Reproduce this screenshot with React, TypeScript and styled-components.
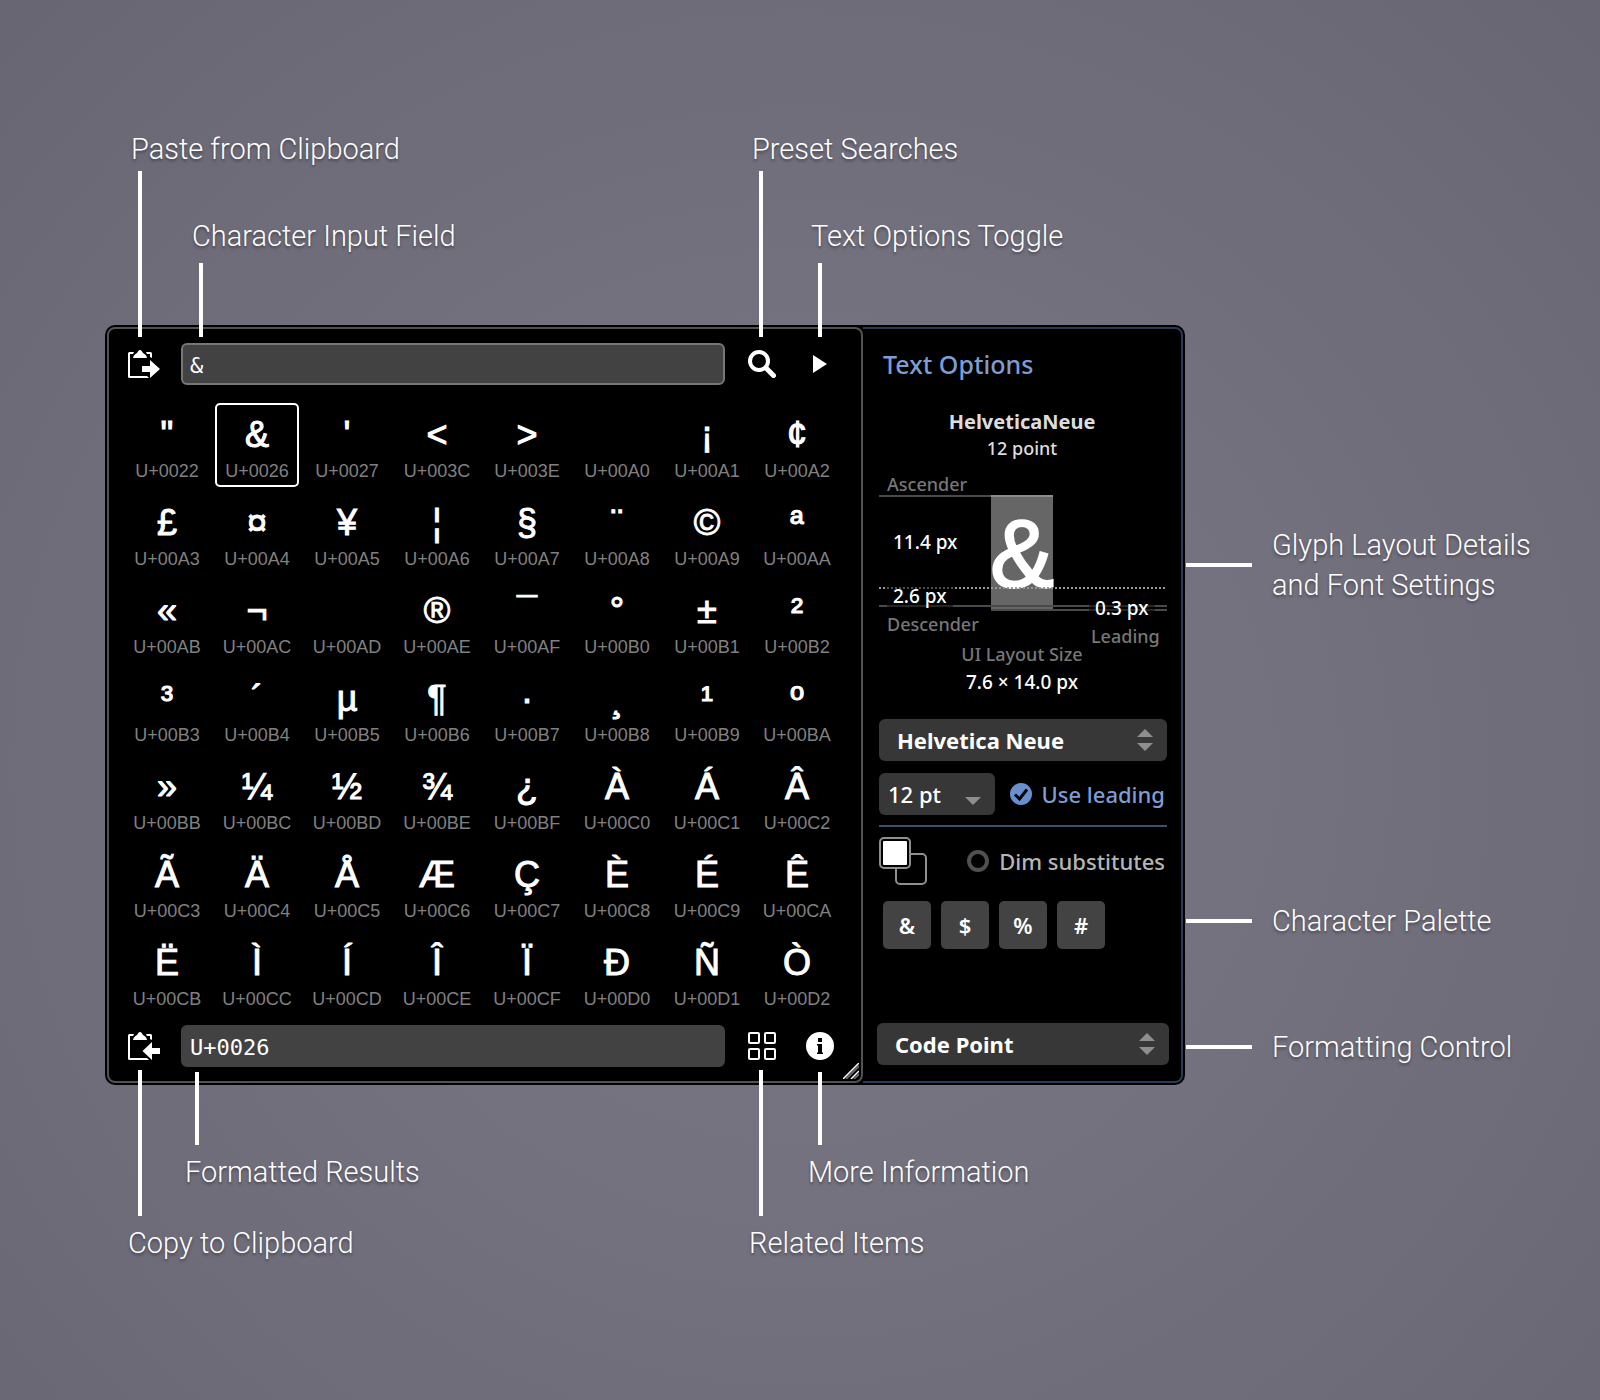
import React from "react";
import styled, { createGlobalStyle, css } from "styled-components";

const GlobalStyle = createGlobalStyle`
  *, *::before, *::after { box-sizing: border-box; }
  body { margin: 0; background: #6d6c79; }
  button, input, select { font: inherit; color: inherit; margin: 0; }
`;

const helvetica = `"Liberation Sans", Arial, sans-serif`;
const lucida = `"Noto Sans", "Open Sans", sans-serif`;

/* ---------- page and window ---------- */

const Page = styled.main`
  min-height: 100vh;
  padding: 325px 415px 315px 105px;
  background: radial-gradient(ellipse at 50% 55%, #787683 0%, #73717e 45%, #686673 100%);
  font-family: ${lucida};
  color: #fff;
`;

const Window = styled.section`
  display: grid;
  grid-template-columns: minmax(0, 1fr) 320px;
  padding: 2px;
  border-radius: 10px;
  background: #000;
`;

const MainPane = styled.div`
  position: relative;
  padding: 14px 0;
  border: 2px solid #525252;
  border-radius: 8px;
`;

const OptionsPane = styled.aside`
  display: flex;
  flex-direction: column;
  padding: 14px 0 16px;
  border: solid #2d3a55;
  border-width: 2px 2px 2px 0;
  border-radius: 0 8px 8px 0;
`;

/* ---------- callouts ---------- */

type Side = "top" | "bottom" | "right";

const Anchor = styled.div<{ $grow?: boolean }>`
  position: relative;
  ${(p) => p.$grow && css`flex: 1; min-width: 0; margin: 0 23px 0 21px;`}
`;

const CalloutBox = styled.div<{ $side: Side; $long?: boolean; $at: number }>`
  position: absolute;
  z-index: 2;
  display: flex;
  pointer-events: none;
  ${(p) =>
    p.$side === "top" &&
    css`
      bottom: calc(100% + 6px);
      left: ${p.$at}px;
      flex-direction: column;
      gap: ${p.$long ? 2 : 7}px;
    `}
  ${(p) =>
    p.$side === "bottom" &&
    css`
      top: calc(100% + ${p.$long ? 3 : 5}px);
      left: ${p.$at}px;
      flex-direction: column-reverse;
      gap: 7px;
    `}
  ${(p) =>
    p.$side === "right" &&
    css`
      left: calc(100% + 5px);
      top: ${p.$at}px;
      flex-direction: row-reverse;
      align-items: center;
      gap: 20px;
    `}
`;

const CalloutText = styled.span<{ $side: Side }>`
  font: 300 29px/40px Roboto, ${helvetica};
  white-space: pre;
  text-shadow: 0 2px 3px rgba(0, 0, 0, 0.4);
  margin-left: ${(p) => (p.$side === "top" ? -7 : p.$side === "bottom" ? -10 : 0)}px;
`;

const Leader = styled.span<{ $side: Side; $long?: boolean }>`
  flex: none;
  background: #fff;
  width: ${(p) => (p.$side === "right" ? 66 : 4)}px;
  height: ${(p) => {
    if (p.$side === "right") return 4;
    if (p.$side === "top") return p.$long ? 166 : 74;
    return p.$long ? 146 : 73;
  }}px;
`;

function Callout({ side, long, at, children }: { side: Side; long?: boolean; at: number; children: React.ReactNode }) {
  return (
    <CalloutBox $side={side} $long={long} $at={at}>
      <CalloutText $side={side}>{children}</CalloutText>
      <Leader $side={side} $long={long} />
    </CalloutBox>
  );
}

/* ---------- main pane ---------- */

const Toolbar = styled.div`
  display: flex;
  align-items: center;
  padding: 0 27px 0 19px;
`;

const ToolGroup = styled.div`
  display: flex;
  gap: 30px;
`;

const IconButton = styled.button`
  display: flex;
  align-items: center;
  justify-content: center;
  min-width: 28px;
  height: 42px;
  padding: 0;
  border: 0;
  background: none;
  cursor: pointer;
`;

const Field = styled.input<{ $outlined?: boolean }>`
  display: block;
  width: 100%;
  height: 42px;
  padding: 3px 7px 0;
  border: 2px solid ${(p) => (p.$outlined ? "#777" : "#424242")};
  border-radius: 6px;
  background: #424242;
  font: 22px/26px "DejaVu Sans Mono", monospace;
  outline: 0;
`;

const GlyphGrid = styled.div`
  display: grid;
  grid-template-columns: repeat(8, 84px);
  justify-content: space-between;
  row-gap: 4px;
  padding: 18px 22px 10px 16px;
`;

const GlyphCell = styled.button<{ $selected?: boolean }>`
  display: flex;
  flex-direction: column;
  align-items: center;
  justify-content: flex-start;
  gap: 6px;
  height: 84px;
  padding: 10px 0 0;
  border: 2px solid ${(p) => (p.$selected ? "#fff" : "transparent")};
  border-radius: 5px;
  background: none;
  font-family: ${helvetica};
`;

const Glyph = styled.span`
  height: 40px;
  font-size: 36px;
  line-height: 40px;
  -webkit-text-stroke: 1px #fff;
`;

const CodePoint = styled.span`
  font-size: 18px;
  line-height: 20px;
  color: #808080;
`;

const Grip = styled.svg`
  position: absolute;
  right: 2px;
  bottom: 2px;
`;

/* ---------- options pane ---------- */

const Title = styled.h2`
  margin: 0;
  padding-left: 20px;
  font-size: 25px;
  font-weight: 500;
  line-height: 42px;
  color: #7d9dd3;
`;

const FontHeading = styled.div`
  padding-top: 24px;
  text-align: center;
  font-size: 18px;
  font-weight: 500;
  line-height: 26px;
  color: #ddd;
`;

const FontName = styled.div`
  font-size: 20px;
  font-weight: 700;
`;

const Section = styled.div<{ $gap?: number; $top?: number }>`
  position: relative;
  display: flex;
  flex-direction: column;
  gap: ${(p) => p.$gap ?? 0}px;
  padding: ${(p) => p.$top ?? 0}px 14px 0 16px;
`;

const Diagram = styled.div`
  position: relative;
  height: 179px;
  font-size: 18px;
  font-weight: 500;
  line-height: 26px;
`;

const Rule = styled.div<{ $y: number; $from?: number; $to?: number; $dotted?: boolean }>`
  position: absolute;
  top: ${(p) => p.$y}px;
  left: ${(p) => p.$from ?? 0}px;
  right: ${(p) => p.$to ?? 0}px;
  height: 2px;
  background: ${(p) => (p.$dotted ? "repeating-linear-gradient(90deg, #999 0 2px, transparent 2px 4px)" : "#4a4a4a")};
`;

const GlyphBox = styled.div`
  position: absolute;
  top: 34px;
  left: 112px;
  width: 62px;
  height: 114px;
  display: flex;
  justify-content: center;
  border-top: 2px solid #8c8c8c;
  background: #666;
  font: 96px/114px ${helvetica};
  -webkit-text-stroke: 2px #fff;
`;

const Measure = styled.span<{ $x: number; $y: number; $muted?: boolean }>`
  position: absolute;
  top: ${(p) => p.$y}px;
  left: ${(p) => p.$x}px;
  padding: 0 6px;
  white-space: nowrap;
  font-size: ${(p) => (p.$muted ? 18 : 19)}px;
  color: ${(p) => (p.$muted ? "#777" : "#fff")};
  background: ${(p) => (p.$muted ? "none" : "rgba(0, 0, 0, 0.5)")};
`;

const LayoutSize = styled.div`
  padding-bottom: 23px;
  text-align: center;
  font-size: 19px;
  font-weight: 500;
  line-height: 28px;
`;

const Muted = styled.div`
  font-size: 18px;
  color: #777;
`;

const SelectBox = styled.div<{ $narrow?: boolean }>`
  position: relative;
  width: ${(p) => (p.$narrow ? "116px" : "100%")};
  flex: none;
  > svg {
    position: absolute;
    top: 10px;
    right: 14px;
    pointer-events: none;
  }
`;

const Select = styled.select<{ $narrow?: boolean }>`
  display: block;
  appearance: none;
  width: 100%;
  height: 42px;
  padding: 0 0 0 ${(p) => (p.$narrow ? 9 : 18)}px;
  border: 0;
  border-radius: 6px;
  background: #373737;
  font-size: 22px;
  font-weight: ${(p) => (p.$narrow ? 500 : 700)};
  line-height: 42px;
`;

const Row = styled.div`
  display: flex;
  align-items: center;
  justify-content: space-between;
  padding-right: 2px;
`;

const Divider = styled.hr`
  width: 100%;
  height: 2px;
  margin: 0;
  border: 0;
  background: #3f4e6e;
`;

const CheckLabel = styled.label<{ $on?: boolean }>`
  position: relative;
  display: flex;
  align-items: center;
  gap: 10px;
  font-size: 22px;
  font-weight: 500;
  line-height: 30px;
  white-space: nowrap;
  color: ${(p) => (p.$on ? "#7d9dd3" : "#b5b5b5")};
  > svg {
    position: absolute;
    left: 0;
    pointer-events: none;
  }
`;

const Check = styled.input`
  appearance: none;
  width: 22px;
  height: 22px;
  border: 4px solid #505050;
  border-radius: 50%;
  &:checked {
    border-color: #6890cf;
    background: #6890cf;
  }
`;

const Swatches = styled.div`
  display: grid;
  grid-template-columns: repeat(3, 16px);
  grid-template-rows: repeat(3, 16px);
`;

const Swatch = styled.button<{ $front?: boolean }>`
  grid-area: ${(p) => (p.$front ? "1 / 1 / 3 / 3" : "2 / 2 / 4 / 4")};
  padding: 2px;
  border: 2px solid #8f8f8f;
  border-radius: 5px;
  background: ${(p) => (p.$front ? "linear-gradient(#fff, #fff) content-box, #000" : "#000")};
`;

const Palette = styled.div`
  display: flex;
  gap: 10px;
  padding: 0 4px;
`;

const PaletteKey = styled.button`
  width: 48px;
  height: 48px;
  padding: 0;
  border: 0;
  border-radius: 5px;
  background: #434343;
  font-size: 22px;
  font-weight: 600;
  line-height: 48px;
`;

const Footer = styled.div`
  position: relative;
  margin-top: auto;
  padding: 0 12px 0 14px;
`;

/* ---------- icons ---------- */

const ClipboardIcon = ({ out }: { out?: boolean }) => (
  <svg width="32" height="28" viewBox="0 0 32 28" fill="#fff" aria-hidden="true">
    <path d="M6 2H1.500Q0 2 0 3.500V26.500Q0 28 1.500 28H21L19 26H2V4H5Z" />
    <path d="M18 2H22.500Q24 2 24 3.500V8L22 7V4H19Z" />
    <path d="M12 0C13.500 0 14 1.500 15 3C16.500 4 18.500 5 19 8H5C5.500 5 7.500 4 9 3C10 1.500 10.500 0 12 0Z" />
    {out ? <path d="M14.500 19L24 10V16H32V22H24V28Z" /> : <path d="M32 19L22 10V16H14V22H22V28Z" />}
  </svg>
);

const SearchIcon = () => (
  <svg width="28" height="28" viewBox="0 0 28 28" fill="none" stroke="#fff" aria-hidden="true">
    <circle cx="11" cy="11" r="9" strokeWidth="4" />
    <path d="M18 18L25.500 25.500" strokeWidth="5" strokeLinecap="round" />
  </svg>
);

const PlayIcon = () => (
  <svg width="14" height="18" viewBox="0 0 14 18" aria-hidden="true">
    <path d="M0 0L14 9L0 18Z" fill="#fff" />
  </svg>
);

const TilesIcon = () => (
  <svg width="28" height="28" viewBox="0 0 28 28" fill="none" stroke="#fff" strokeWidth="2" aria-hidden="true">
    {[1, 17].map((y) => [1, 17].map((x) => <rect key={`${x}-${y}`} x={x} y={y} width="10" height="10" rx="1" />))}
  </svg>
);

const InfoIcon = () => (
  <svg width="28" height="28" viewBox="0 0 28 28" aria-hidden="true">
    <circle cx="14" cy="14" r="14" fill="#fff" />
    <path d="M12 6H16V10H12ZM11 12H16V20.500H17V22H11V20.500H12V13.500H11Z" fill="#000" />
  </svg>
);

const StepperIcon = () => (
  <svg width="16" height="22" viewBox="0 0 16 22" fill="#8e8e8e" aria-hidden="true">
    <path d="M0 8L8 0L16 8ZM0 14H16L8 22Z" />
  </svg>
);

const DropIcon = () => (
  <svg width="16" height="22" viewBox="0 0 16 22" fill="#8e8e8e" aria-hidden="true">
    <path d="M0 14H16L8 22Z" />
  </svg>
);

const CheckIcon = () => (
  <svg width="22" height="22" viewBox="0 0 22 22" fill="none" stroke="#000" strokeWidth="3" aria-hidden="true">
    <path d="M5 11.500L9.500 16L17 6.500" />
  </svg>
);

/* ---------- data ---------- */

const range = (from: number, to: number) => Array.from({ length: to - from + 1 }, (_, i) => from + i);
const codePoints = [0x22, 0x26, 0x27, 0x3c, 0x3e, ...range(0xa0, 0xd2)];
const format = (cp: number) => `U+${cp.toString(16).toUpperCase().padStart(4, "0")}`;

export default function App() {
  const [selected, setSelected] = React.useState(0x26);
  return (
    <>
      <GlobalStyle />
      <Page>
        <Window>
          <MainPane>
            <Toolbar>
              <Anchor>
                <IconButton aria-label="Paste"><ClipboardIcon /></IconButton>
                <Callout side="top" long at={10}>Paste from Clipboard</Callout>
              </Anchor>
              <Anchor $grow>
                <Field $outlined aria-label="Character" value={String.fromCodePoint(selected)} readOnly />
                <Callout side="top" at={18}>Character Input Field</Callout>
              </Anchor>
              <ToolGroup>
                <Anchor>
                  <IconButton aria-label="Search"><SearchIcon /></IconButton>
                  <Callout side="top" long at={11}>Preset Searches</Callout>
                </Anchor>
                <Anchor>
                  <IconButton aria-label="Toggle options"><PlayIcon /></IconButton>
                  <Callout side="top" at={12}>Text Options Toggle</Callout>
                </Anchor>
              </ToolGroup>
            </Toolbar>

            <GlyphGrid>
              {codePoints.map((cp) => (
                <GlyphCell key={cp} $selected={cp === selected} onClick={() => setSelected(cp)}>
                  <Glyph>{cp === 0xad ? "" : String.fromCodePoint(cp)}</Glyph>
                  <CodePoint>{format(cp)}</CodePoint>
                </GlyphCell>
              ))}
            </GlyphGrid>

            <Toolbar>
              <Anchor>
                <IconButton aria-label="Copy"><ClipboardIcon out /></IconButton>
                <Callout side="bottom" long at={10}>Copy to Clipboard</Callout>
              </Anchor>
              <Anchor $grow>
                <Field aria-label="Result" value={format(selected)} readOnly />
                <Callout side="bottom" at={14}>Formatted Results</Callout>
              </Anchor>
              <ToolGroup>
                <Anchor>
                  <IconButton aria-label="Related"><TilesIcon /></IconButton>
                  <Callout side="bottom" long at={11}>Related Items</Callout>
                </Anchor>
                <Anchor>
                  <IconButton aria-label="Information"><InfoIcon /></IconButton>
                  <Callout side="bottom" at={12}>More Information</Callout>
                </Anchor>
              </ToolGroup>
            </Toolbar>
            <Grip width="16" height="16" viewBox="0 0 16 16" fill="none" aria-hidden="true">
              <path d="M3 16L16 3M11 16L16 11" stroke="#666" strokeWidth="2" />
              <path d="M0 16L16 0M8 16L16 8" stroke="#fff" strokeWidth="1.500" />
            </Grip>
          </MainPane>

          <OptionsPane>
            <Title>Text Options</Title>
            <FontHeading>
              <FontName>HelveticaNeue</FontName>
              12 point
            </FontHeading>

            <Section>
              <Diagram>
                <GlyphBox>&amp;</GlyphBox>
                <Rule $y={34} $to={176} />
                <Rule $y={126} $to={2} $dotted />
                <Rule $y={144} />
                <Rule $y={148} $from={112} />
                <Measure $x={2} $y={10} $muted>Ascender</Measure>
                <Measure $x={8} $y={68}>11.4 px</Measure>
                <Measure $x={8} $y={122}>2.6 px</Measure>
                <Measure $x={2} $y={150} $muted>Descender</Measure>
                <Measure $x={210} $y={134}>0.3 px</Measure>
                <Measure $x={206} $y={162} $muted>Leading</Measure>
              </Diagram>
              <Callout side="right" at={64}>{"Glyph Layout Details\nand Font Settings"}</Callout>
            </Section>
            <LayoutSize>
              <Muted>UI Layout Size</Muted>
              7.6 × 14.0 px
            </LayoutSize>

            <Section $gap={12}>
              <SelectBox>
                <Select aria-label="Font"><option>Helvetica Neue</option></Select>
                <StepperIcon />
              </SelectBox>
              <Row>
                <SelectBox $narrow>
                  <Select $narrow aria-label="Size"><option>12 pt</option></Select>
                  <DropIcon />
                </SelectBox>
                <CheckLabel $on>
                  <Check type="checkbox" defaultChecked />
                  <CheckIcon />
                  Use leading
                </CheckLabel>
              </Row>
            </Section>
            <Section $gap={10} $top={10}>
              <Divider />
              <Row>
                <Swatches>
                  <Swatch aria-label="Background colour" />
                  <Swatch $front aria-label="Text colour" />
                </Swatches>
                <CheckLabel>
                  <Check type="checkbox" />
                  Dim substitutes
                </CheckLabel>
              </Row>
            </Section>
            <Section $top={16}>
              <Palette>
                {["&", "$", "%", "#"].map((c) => <PaletteKey key={c}>{c}</PaletteKey>)}
              </Palette>
              <Callout side="right" at={16}>Character Palette</Callout>
            </Section>

            <Footer>
              <SelectBox>
                <Select aria-label="Format"><option>Code Point</option></Select>
                <StepperIcon />
              </SelectBox>
              <Callout side="right" at={4}>Formatting Control</Callout>
            </Footer>
          </OptionsPane>
        </Window>
      </Page>
    </>
  );
}
